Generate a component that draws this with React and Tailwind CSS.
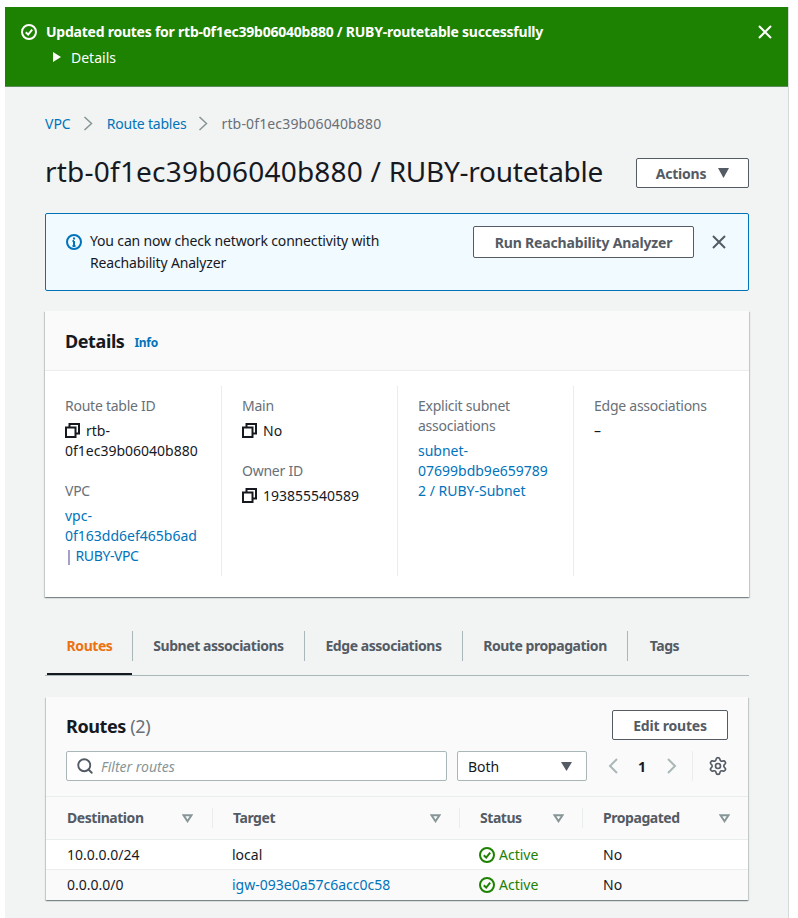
import { Settings, Search } from 'lucide-react';

const font = "font-['Noto_Sans','Open_Sans',sans-serif]";

function CopyIcon() {
  return (
    <svg width="15" height="15" viewBox="0 0 15 15" fill="none" stroke="#16191f" strokeWidth="2" className="inline-block align-[-2px]">
      <rect x="1" y="4.5" width="9.5" height="9.5" />
      <path d="M4.5 4V1H14V10.5H11" />
    </svg>
  );
}

function CloseIcon({ color, size = 14 }) {
  return (
    <svg width={size} height={size} viewBox="0 0 14 14" fill="none" stroke={color} strokeWidth="2">
      <path d="M1 1L13 13M13 1L1 13" />
    </svg>
  );
}

function CheckCircle({ color, size = 16 }) {
  return (
    <svg width={size} height={size} viewBox="0 0 16 16" fill="none" stroke={color} strokeWidth="2" className="shrink-0">
      <circle cx="8" cy="8" r="7" />
      <path d="M4.8 8.2L7.2 10.6L11.2 5.6" />
    </svg>
  );
}

function SortIcon() {
  return (
    <svg width="11" height="9" viewBox="0 0 11 9" fill="none" stroke="#879596" strokeWidth="2" className="shrink-0">
      <path d="M1.5 1.2H9.5L5.5 7.2Z" />
    </svg>
  );
}

function Chevron({ left }) {
  return (
    <svg width="12" height="16" viewBox="0 0 12 16" fill="none" stroke="#aab7b8" strokeWidth="2">
      <path d={left ? 'M10 1L3 8L10 15' : 'M2 1L9 8L2 15'} />
    </svg>
  );
}

function BreadcrumbSep() {
  return (
    <svg width="10" height="15" viewBox="0 0 10 15" fill="none" stroke="#879596" strokeWidth="1.5" className="ml-[12px] mr-[14px]">
      <path d="M1.5 1L8.5 7.5L1.5 14" />
    </svg>
  );
}

function Label({ children }) {
  return <div className="text-[#687078] leading-5 tracking-[-0.25px]">{children}</div>;
}

function CopyValue({ children }) {
  return (
    <div className="mt-[5px] leading-5 text-[#16191f]">
      <CopyIcon />
      <span className="ml-[6px]">{children}</span>
    </div>
  );
}

function Tab({ children, active }) {
  return (
    <div className={`h-[44px] pt-[5px] leading-5 text-center font-bold tracking-[-0.45px] ${active ? 'text-[#ec7211] border-b-2 border-[#16191f]' : 'text-[#545b64]'}`}>
      {children}
    </div>
  );
}

function TabSep() {
  return <div className="w-px h-[30px] bg-[#aab7b8]" />;
}

function HeadCell({ children }) {
  return (
    <div className="flex items-center justify-between h-[20px] font-bold text-[#545b64] tracking-[-0.45px]">
      <span className="-mt-[2px]">{children}</span>
      <SortIcon />
    </div>
  );
}

function Row({ dest, target, link, last }) {
  return (
    <div className={`grid grid-cols-[167px_247px_123px_1fr] items-center h-[30px] ${last ? 'bg-[#fafafa] pb-[1px]' : 'bg-white border-b border-[#eaeded]'}`}>
      <div className="pl-[21px] text-[#16191f]">{dest}</div>
      <div className={`pl-[19px] ${link ? 'text-[#0073bb]' : 'text-[#16191f]'}`}>{target}</div>
      <div className="pl-[19px] flex items-center gap-[4px] text-[#1d8102]">
        <CheckCircle color="#1d8102" />
        <span>Active</span>
      </div>
      <div className="pl-[20px] text-[#16191f]">No</div>
    </div>
  );
}

export default function App() {
  return (
    <div className={`${font} bg-white pt-[7px] pl-[5px] pr-[9px] h-[918px] overflow-hidden text-[14px]`}>
      <div className="bg-[#f2f3f3] border-r border-[#d5dbdb] h-full">
        {/* flash */}
        <div className="h-[80px] bg-[#1d8102] text-white border-b border-[#879596]/60 pl-[16px] pr-[16px] pt-[15px]">
          <div className="flex items-center justify-between h-[20px]">
            <div className="flex items-center gap-[9px]">
              <CheckCircle color="#ffffff" />
              <span className="font-bold leading-5 tracking-[-0.24px]">Updated routes for rtb-0f1ec39b06040b880 / RUBY-routetable successfully</span>
            </div>
            <CloseIcon color="#ffffff" />
          </div>
          <div className="flex items-center mt-[5px] ml-[32px] h-[20px]">
            <svg width="8" height="10" viewBox="0 0 8 10" fill="#ffffff"><path d="M0 0L8 5L0 10Z" /></svg>
            <span className="ml-[10px]">Details</span>
          </div>
        </div>

        <div className="pl-[40px] pr-[39px]">
          {/* breadcrumb */}
          <div className="flex items-center h-[20px] mt-[26px]">
            <span className="text-[#0073bb]">VPC</span>
            <BreadcrumbSep />
            <span className="text-[#0073bb] tracking-[-0.2px]">Route tables</span>
            <BreadcrumbSep />
            <span className="text-[#687078] tracking-[0.15px] -ml-[1px]">rtb-0f1ec39b06040b880</span>
          </div>

          {/* title */}
          <div className="flex items-center justify-between mt-[25px] h-[30px]">
            <h1 className="text-[28px] leading-[30px] text-[#16191f] whitespace-nowrap pb-[4px]">
              <span className="tracking-[0.22px]">rtb-0f1ec39b06040b880 / </span>
              <span className="tracking-[-0.25px]">RUBY-routetable</span>
            </h1>
            <button className="w-[113px] h-[30px] bg-white border border-[#545b64] rounded-[2px] flex items-center justify-center gap-[12px] font-bold text-[#545b64] tracking-[-0.2px]">
              Actions
              <svg width="11" height="10" viewBox="0 0 11 10" fill="#545b64"><path d="M0 0H11L5.5 10Z" /></svg>
            </button>
          </div>

          {/* info alert */}
          <div className="mt-[25px] h-[78px] bg-[#f1faff] border border-[#0073bb] rounded-[2px] flex pl-[20px] pr-[22px] pt-[17px]">
            <svg width="16" height="16" viewBox="0 0 16 16" fill="none" className="mt-[3px] shrink-0">
              <circle cx="8" cy="8" r="7" stroke="#0073bb" strokeWidth="2" />
              <path d="M8 7V12M6.5 12H9.5M6.5 7H8" stroke="#0073bb" strokeWidth="2" />
              <path d="M8 3.5V5.5" stroke="#0073bb" strokeWidth="2" />
            </svg>
            <div className="ml-[8px] w-[320px] leading-[22px] text-[#16191f] tracking-[-0.16px] -mt-[1px]">You can now check network connectivity with Reachability Analyzer</div>
            <div className="ml-auto flex items-start gap-[18px] -mt-[5px]">
              <button className="w-[221px] h-[32px] bg-white border border-[#545b64] rounded-[2px] font-bold text-[#545b64] tracking-[-0.16px]">Run Reachability Analyzer</button>
              <div className="mt-[9px]"><CloseIcon color="#545b64" /></div>
            </div>
          </div>

          {/* details */}
          <div className="mt-[20px] h-[286px] bg-white shadow-[0_1px_1px_0_rgba(0,28,36,0.3),1px_1px_1px_0_rgba(0,28,36,0.15),-1px_1px_1px_0_rgba(0,28,36,0.15)]">
            <div className="h-[60px] bg-[#fafafa] border-b border-[#eaeded] flex items-center pl-[20px] pt-[1px]">
              <h2 className="text-[18px] font-bold text-[#16191f] leading-6 tracking-[-0.4px]">Details</h2>
              <span className="ml-[10px] mt-[3px] text-[12px] font-bold text-[#0073bb] tracking-[-0.3px]">Info</span>
            </div>
            <div className="grid grid-cols-[177px_176px_176px_1fr] pt-[15px]">
              <div className="h-[190px] border-r border-[#eaeded] pl-[20px] pr-[20px] pt-[10px]">
                <Label>Route table ID</Label>
                <CopyValue>rtb-0f1ec39b06040b880</CopyValue>
                <div className="mt-[20px]"><Label>VPC</Label></div>
                <div className="mt-[5px] leading-5 text-[#0073bb] break-words">vpc-0f163dd6ef465b6ad <span className="tracking-[-0.4px]">| RUBY-VPC</span></div>
              </div>
              <div className="h-[190px] border-r border-[#eaeded] pl-[20px] pt-[10px]">
                <Label>Main</Label>
                <CopyValue>No</CopyValue>
                <div className="mt-[20px]"><Label>Owner ID</Label></div>
                <CopyValue>193855540589</CopyValue>
              </div>
              <div className="h-[190px] border-r border-[#eaeded] pl-[20px] pr-[20px] pt-[10px]">
                <Label>Explicit subnet associations</Label>
                <div className="mt-[5px] leading-5 text-[#0073bb] break-words">subnet-07699bdb9e6597892 / RUBY-Subnet</div>
              </div>
              <div className="pl-[20px] pt-[10px]">
                <Label>Edge associations</Label>
                <div className="mt-[5px] leading-5 text-[#16191f]">–</div>
              </div>
            </div>
          </div>

          {/* tabs */}
          <div className="mt-[34px] h-[45px] border-b border-[#aab7b8] flex items-start pl-[2px]">
            <div className="w-[85px]"><Tab active>Routes</Tab></div>
            <TabSep />
            <div className="w-[171px]"><Tab>Subnet associations</Tab></div>
            <TabSep />
            <div className="w-[157px]"><Tab>Edge associations</Tab></div>
            <TabSep />
            <div className="w-[164px]"><Tab>Route propagation</Tab></div>
            <TabSep />
            <div className="w-[73px]"><Tab>Tags</Tab></div>
          </div>

          {/* routes table */}
          <div className="mt-[21px] ml-[1px] mr-[1px] bg-[#fafafa] shadow-[0_1px_1px_0_rgba(0,28,36,0.3),1px_1px_1px_0_rgba(0,28,36,0.15),-1px_1px_1px_0_rgba(0,28,36,0.15)]">
            <div className="px-[20px] pt-[13px] pb-[15px] border-b border-[#eaeded]">
              <div className="flex items-center justify-between h-[30px]">
                <h2 className="text-[18px] font-bold text-[#16191f] leading-6 tracking-[-0.4px] pt-[1px]">Routes <span className="font-normal text-[#687078]">(2)</span></h2>
                <button className="w-[116px] h-[30px] bg-white border border-[#545b64] rounded-[2px] font-bold text-[#545b64] tracking-[-0.2px]">Edit routes</button>
              </div>
              <div className="flex items-center mt-[11px] h-[30px]">
                <div className="w-[381px] h-[30px] bg-white border border-[#aab7b8] rounded-[2px] flex items-center pl-[9px]">
                  <Search size={18} strokeWidth={2.5} color="#545b64" />
                  <span className="ml-[7px] italic text-[#879596]">Filter routes</span>
                </div>
                <div className="ml-[10px] w-[130px] h-[30px] bg-white border border-[#aab7b8] rounded-[2px] flex items-center justify-between pl-[10px] pr-[14px] text-[#16191f]">
                  Both
                  <svg width="11" height="9" viewBox="0 0 11 9" fill="#545b64"><path d="M0 0H11L5.5 9Z" /></svg>
                </div>
                <div className="ml-[20px] flex items-center">
                  <Chevron left />
                  <span className="ml-[19px] w-[8px] font-bold text-[#16191f]">1</span>
                  <div className="ml-[20px]"><Chevron /></div>
                </div>
                <div className="ml-[14px] w-px h-[30px] bg-[#eaeded]" />
                <div className="ml-[15px] flex"><Settings size={20} strokeWidth={2} color="#545b64" /></div>
              </div>
            </div>

            <div className="grid grid-cols-[167px_247px_123px_1fr] items-center h-[43px] border-b border-[#eaeded] bg-[#fafafa]">
              <div className="border-r border-[#eaeded] pl-[21px] pr-[19px]"><HeadCell>Destination</HeadCell></div>
              <div className="border-r border-[#eaeded] pl-[20px] pr-[18px]"><HeadCell>Target</HeadCell></div>
              <div className="border-r border-[#eaeded] pl-[20px] pr-[18px]"><HeadCell>Status</HeadCell></div>
              <div className="pl-[20px] pr-[18px]"><HeadCell>Propagated</HeadCell></div>
            </div>
            <Row dest="10.0.0.0/24" target="local" />
            <Row dest="0.0.0.0/0" target="igw-093e0a57c6acc0c58" link last />
          </div>
        </div>
      </div>
    </div>
  );
}
